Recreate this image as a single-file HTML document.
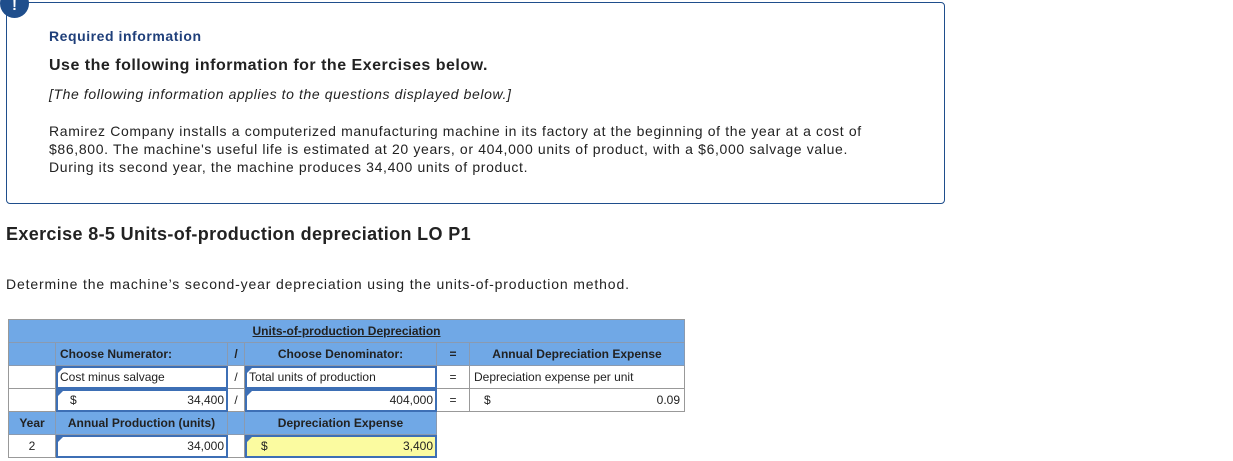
<!DOCTYPE html>
<html><head><meta charset="utf-8"><style>
body{margin:0;width:1233px;height:461px;background:#fff;font-family:"Liberation Sans",sans-serif;position:relative;overflow:hidden;color:#222}
.a{position:absolute;white-space:nowrap}
.box{position:absolute;left:6px;top:2px;width:937px;height:200px;border:1px solid #1f4e8c;border-radius:4px}
.ic{position:absolute;left:0;top:-11px;width:29px;height:29px;border-radius:50%;background:#1f4e8c;color:#fff;font-weight:bold;font-size:15px;text-align:center;line-height:34px}
.c{position:absolute;box-sizing:border-box;font-size:12px;line-height:22px;white-space:nowrap;overflow:hidden}
.bl{background:#70a8e6;border-right:1px solid #8a9ab0;border-bottom:1px solid #8a9ab0}
.w{background:#fff;border-right:1px solid #999;border-bottom:1px solid #999}
.in{position:absolute;box-sizing:border-box;border:2px solid #3d6fb5;background:#fff;font-size:12px;line-height:19px;padding:0 2px}
.in:before{content:"";position:absolute;left:0;top:0;border-top:5px solid #3d6fb5;border-right:5px solid transparent}
b{font-weight:bold}
</style></head><body>
<div class="box"></div><div class="ic">!</div>
<div class="a" style="left:49px;top:28px;font-size:14px;font-weight:bold;color:#1f3f7a;letter-spacing:0.55px">Required information</div>
<div class="a" style="left:49px;top:57px;font-size:16px;font-weight:bold;letter-spacing:0.5px">Use the following information for the Exercises below.</div>
<div class="a" style="left:49px;top:86px;font-size:14px;font-style:italic;letter-spacing:0.6px">[The following information applies to the questions displayed below.]</div>
<div class="a" style="left:49px;top:122px;font-size:14px;line-height:18px;letter-spacing:0.65px">Ramirez Company installs a computerized manufacturing machine in its factory at the beginning of the year at a cost of<br>$86,800. The machine's useful life is estimated at 20 years, or 404,000 units of product, with a $6,000 salvage value.<br>During its second year, the machine produces 34,400 units of product.</div>
<div class="a" style="left:6px;top:224px;font-size:18px;font-weight:bold;letter-spacing:0.35px">Exercise 8-5 Units-of-production depreciation LO P1</div>
<div class="a" style="left:6px;top:276px;font-size:14px;letter-spacing:0.85px">Determine the machine’s second-year depreciation using the units-of-production method.</div>

<div style="position:absolute;left:8px;top:319px;width:677px;height:139px;border:1px solid #999;border-right:none;border-bottom:none;box-sizing:border-box"></div>
<div class="c bl" style="left:9px;top:320px;width:676px;height:23px;text-align:center"><b style="text-decoration:underline">Units-of-production Depreciation</b></div>
<div class="c bl" style="left:9px;top:343px;width:47px;height:23px"></div>
<div class="c bl" style="left:56px;top:343px;width:172px;height:23px;padding-left:4px"><b>Choose Numerator:</b></div>
<div class="c bl" style="left:228px;top:343px;width:17px;height:23px;text-align:center"><b>/</b></div>
<div class="c bl" style="left:245px;top:343px;width:192px;height:23px;text-align:center"><b>Choose Denominator:</b></div>
<div class="c bl" style="left:437px;top:343px;width:33px;height:23px;text-align:center"><b>=</b></div>
<div class="c bl" style="left:470px;top:343px;width:215px;height:23px;text-align:center"><b>Annual Depreciation Expense</b></div>
<div class="c w" style="left:9px;top:366px;width:47px;height:23px"></div>
<div class="c w" style="left:228px;top:366px;width:17px;height:23px;text-align:center">/</div>
<div class="c w" style="left:437px;top:366px;width:33px;height:23px;text-align:center">=</div>
<div class="c w" style="left:470px;top:366px;width:215px;height:23px;padding-left:4px">Depreciation expense per unit</div>
<div class="in" style="left:56px;top:366px;width:172px;height:23px">Cost minus salvage</div>
<div class="in" style="left:245px;top:366px;width:192px;height:23px">Total units of production</div>
<div class="c w" style="left:9px;top:389px;width:47px;height:23px"></div>
<div class="c w" style="left:228px;top:389px;width:17px;height:23px;text-align:center">/</div>
<div class="c w" style="left:437px;top:389px;width:33px;height:23px;text-align:center">=</div>
<div class="c w" style="left:470px;top:389px;width:215px;height:23px;padding:0 4px 0 14px">$<span style="float:right">0.09</span></div>
<div class="in" style="left:56px;top:389px;width:172px;height:23px;padding-left:12px">$<span style="float:right">34,400</span></div>
<div class="in" style="left:245px;top:389px;width:192px;height:23px;text-align:right">404,000</div>
<div class="c bl" style="left:9px;top:412px;width:47px;height:23px;text-align:center"><b>Year</b></div>
<div class="c bl" style="left:56px;top:412px;width:172px;height:23px;text-align:center"><b>Annual Production (units)</b></div>
<div class="c bl" style="left:228px;top:412px;width:17px;height:23px"></div>
<div class="c bl" style="left:245px;top:412px;width:192px;height:23px;text-align:center"><b>Depreciation Expense</b></div>
<div class="c w" style="left:9px;top:435px;width:47px;height:23px;text-align:center">2</div>
<div class="c w" style="left:228px;top:435px;width:17px;height:23px"></div>
<div class="in" style="left:56px;top:435px;width:172px;height:23px;text-align:right">34,000</div>
<div class="in" style="left:245px;top:435px;width:192px;height:23px;background:#fbfba0;padding-left:14px">$<span style="float:right">3,400</span></div>
</body></html>
